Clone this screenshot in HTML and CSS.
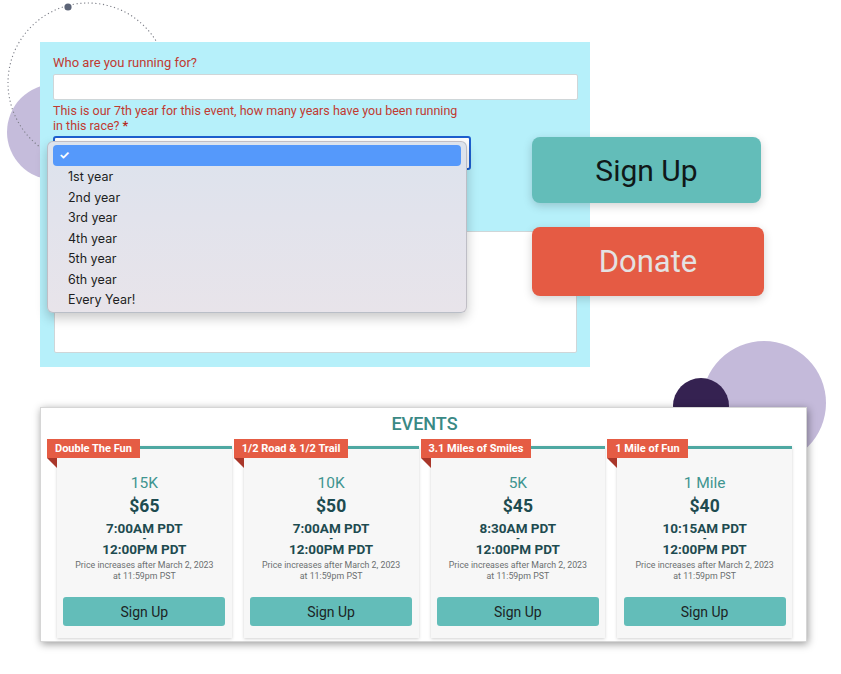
FILE: index.html
```html
<!DOCTYPE html>
<html lang="en">
<head>
<meta charset="utf-8">
<title>Race signup</title>
<link rel="stylesheet" href="styles.css">
</head>
<body>
<div class="canvas">
  <svg class="decor" width="841" height="674" viewBox="0 0 841 674" aria-hidden="true">
    <circle cx="55" cy="132" r="48" fill="#c5bcdb"/>
    <circle cx="88" cy="83" r="80" fill="none" stroke="#7d7f88" stroke-width="1.1" stroke-dasharray="1.2 2.6"/>
    <circle cx="68" cy="7" r="3.6" fill="#5c6477"/>
    <circle cx="764" cy="403" r="62" fill="#c4bada"/>
    <circle cx="701" cy="406" r="28" fill="#352251"/>
  </svg>

  <form class="form-panel">
    <label class="label">Who are you running for?</label>
    <input class="text-input" type="text">
    <label class="label label-wrap">This is our 7th year for this event, how many years have you been running in this race? <span class="req">*</span></label>
    <div class="select-box"></div>
    <textarea class="text-area"></textarea>

    <ul class="menu">
      <li class="menu-item selected"><span class="check">✓</span></li>
      <li class="menu-item">1st year</li>
      <li class="menu-item">2nd year</li>
      <li class="menu-item">3rd year</li>
      <li class="menu-item">4th year</li>
      <li class="menu-item">5th year</li>
      <li class="menu-item">6th year</li>
      <li class="menu-item">Every Year!</li>
    </ul>
  </form>

  <div class="cta">
    <button class="btn-big btn-signup">Sign Up</button>
    <button class="btn-big btn-donate">Donate</button>
  </div>

  <section class="events">
    <h2 class="events-title">EVENTS</h2>
    <div class="cards">
      <div class="card">
        <span class="ribbon">Double The Fun</span>
        <div class="dist">15K</div>
        <div class="price">$65</div>
        <div class="time">7:00AM PDT</div>
        <div class="dash">-</div>
        <div class="time">12:00PM PDT</div>
        <p class="note">Price increases after March 2, 2023<br>at 11:59pm PST</p>
        <button class="btn-card">Sign Up</button>
      </div>
      <div class="card">
        <span class="ribbon">1/2 Road &amp; 1/2 Trail</span>
        <div class="dist">10K</div>
        <div class="price">$50</div>
        <div class="time">7:00AM PDT</div>
        <div class="dash">-</div>
        <div class="time">12:00PM PDT</div>
        <p class="note">Price increases after March 2, 2023<br>at 11:59pm PST</p>
        <button class="btn-card">Sign Up</button>
      </div>
      <div class="card">
        <span class="ribbon">3.1 Miles of Smiles</span>
        <div class="dist">5K</div>
        <div class="price">$45</div>
        <div class="time">8:30AM PDT</div>
        <div class="dash">-</div>
        <div class="time">12:00PM PDT</div>
        <p class="note">Price increases after March 2, 2023<br>at 11:59pm PST</p>
        <button class="btn-card">Sign Up</button>
      </div>
      <div class="card">
        <span class="ribbon">1 Mile of Fun</span>
        <div class="dist">1 Mile</div>
        <div class="price">$40</div>
        <div class="time">10:15AM PDT</div>
        <div class="dash">-</div>
        <div class="time">12:00PM PDT</div>
        <p class="note">Price increases after March 2, 2023<br>at 11:59pm PST</p>
        <button class="btn-card">Sign Up</button>
      </div>
    </div>
  </section>
</div>
</body>
</html>
```

FILE: styles.css
```css
* { box-sizing: border-box; }
html, body { margin: 0; padding: 0; background: #ffffff; }
body { font-family: Roboto, "Liberation Sans", sans-serif; }

.canvas {
  position: relative;
  width: 841px;
  height: 674px;
  overflow: hidden;
  background: #ffffff;
}

.decor { position: absolute; left: 0; top: 0; }

/* ---------- form panel ---------- */
.form-panel {
  position: absolute;
  left: 40px;
  top: 42px;
  width: 550px;
  height: 325px;
  margin: 0;
  padding: 13px 12px 0 13px;
  background: #b6f0fa;
  display: flex;
  flex-direction: column;
  align-items: flex-start;
}
.label {
  font-size: 13px;
  line-height: 16px;
  color: #c13a31;
}
.label-wrap { width: 414px; margin-top: 3px; font-size: 12.5px; line-height: 15px; }
.req { color: #b32a22; font-weight: 700; }
.text-input {
  margin-top: 3px;
  width: 525px;
  height: 26px;
  border: 1px solid #cfd6d8;
  border-radius: 2px;
  background: #ffffff;
}
.select-box {
  margin-top: 3px;
  width: 418px;
  height: 34px;
  border: 2px solid #1d5fcf;
  border-radius: 3px;
  background: #ffffff;
}
.text-area {
  margin-top: 61px;
  margin-left: 1px;
  width: 523px;
  height: 122px;
  border: 1px solid #cfd6d8;
  border-radius: 2px;
  background: #ffffff;
  resize: none;
}

.menu {
  position: absolute;
  left: 7px;
  top: 99px;
  width: 420px;
  height: 172px;
  margin: 0;
  padding: 3px 5px;
  list-style: none;
  border-radius: 6px;
  border: 1px solid rgba(120, 120, 130, 0.35);
  background: linear-gradient(180deg, #dce3ed 0%, #e2e3ec 45%, #e8e4ea 100%);
  box-shadow: 0 5px 12px rgba(0, 0, 0, 0.22);
  font-family: Inter, "Open Sans", sans-serif;
  font-size: 12.5px;
  color: #1d1e22;
}
.menu-item {
  height: 20.5px;
  line-height: 20.5px;
  padding-left: 15px;
}
.menu-item.selected {
  height: 21px;
  background: #5599fb;
  border-radius: 4px;
  padding-left: 6px;
  margin-bottom: 1px;
  color: #ffffff;
}
.check { font-size: 12px; font-weight: 700; }

/* ---------- big buttons ---------- */
.cta {
  position: absolute;
  left: 532px;
  top: 137px;
  display: flex;
  flex-direction: column;
  align-items: flex-start;
  gap: 24px;
}
.btn-big {
  border: none;
  border-radius: 8px;
  font-family: Roboto, "Liberation Sans", sans-serif;
  font-size: 30px;
  box-shadow: 0 3px 10px rgba(0, 0, 0, 0.18);
  padding: 0;
}
.btn-signup {
  width: 229px;
  height: 66px;
  background: #63bdb9;
  color: #101818;
}
.btn-donate {
  width: 232px;
  height: 69px;
  background: #e55b44;
  color: #e4e2e2;
  font-size: 31px;
}

/* ---------- events ---------- */
.events {
  position: absolute;
  left: 40px;
  top: 407px;
  width: 767px;
  height: 235px;
  background: #ffffff;
  border: 1px solid #d6d6d6;
  box-shadow: 1px 2px 8px rgba(0, 0, 0, 0.4);
  padding: 5px 14px 0 16px;
}
.events-title {
  margin: 0;
  text-align: center;
  font-size: 18px;
  line-height: 22px;
  font-weight: 500;
  color: #3a8985;
}
.cards {
  margin-top: 11px;
  display: flex;
  gap: 12px;
}
.card {
  position: relative;
  width: 175px;
  height: 192px;
  background: #f7f7f7;
  border-top: 3px solid #4ea8a2;
  box-shadow: 0 1px 3px rgba(0, 0, 0, 0.18);
  padding: 25px 6px 0;
  display: flex;
  flex-direction: column;
  align-items: center;
  text-align: center;
}
.ribbon {
  position: absolute;
  left: -10px;
  top: -10px;
  height: 19px;
  line-height: 19px;
  padding: 0 8px;
  background: #e55c44;
  color: #ffffff;
  font-size: 11px;
  font-weight: 700;
  white-space: nowrap;
}
.ribbon::after {
  content: "";
  position: absolute;
  left: 0;
  top: 19px;
  border-top: 10px solid #a9372a;
  border-left: 10px solid transparent;
}
.dist {
  font-size: 15.5px;
  line-height: 18px;
  color: #3f9590;
}
.price {
  margin-top: 3px;
  font-size: 17.5px;
  line-height: 22px;
  font-weight: 700;
  color: #1e4b50;
}
.time {
  font-size: 13.5px;
  line-height: 14px;
  font-weight: 700;
  color: #1e4b50;
}
.price + .time { margin-top: 4px; }
.dash {
  font-size: 10px;
  line-height: 7px;
  font-weight: 700;
  color: #1e4b50;
}
.note {
  margin: 4px 0 0;
  font-size: 8.8px;
  line-height: 11px;
  color: #6b6f70;
}
.btn-card {
  margin-top: 15px;
  width: 162px;
  height: 29px;
  border: none;
  border-radius: 3px;
  background: #63bdb9;
  color: #1c2424;
  font-family: Roboto, "Liberation Sans", sans-serif;
  font-size: 14px;
  padding: 0;
}
```
